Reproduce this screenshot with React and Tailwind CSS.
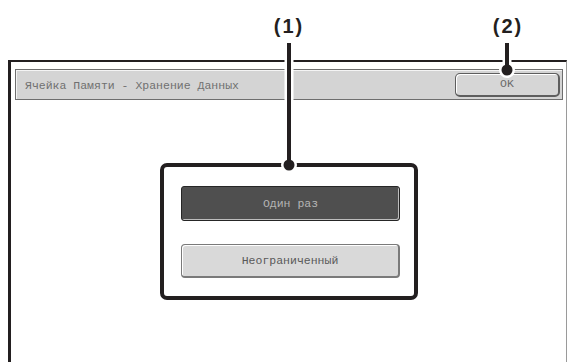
const mono = { fontFamily: '"Liberation Mono", "Courier New", monospace' };

const Callouts = () => (
  <div className="absolute inset-0 pointer-events-none">
    <svg width="568" height="362" className="absolute left-0 top-0">
      {/* white halo so the leader lines break the borders they cross */}
      <line x1="289" y1="43" x2="289" y2="165" stroke="#fff" strokeWidth="9" />
      <line x1="507" y1="43" x2="507" y2="70" stroke="#fff" strokeWidth="9" />
      <circle cx="289" cy="165" r="8" fill="#fff" />
      <circle cx="507" cy="70" r="8" fill="#fff" />
      <line x1="289" y1="43" x2="289" y2="165" stroke="#231f20" strokeWidth="4" />
      <line x1="507" y1="43" x2="507" y2="70" stroke="#231f20" strokeWidth="4" />
      <circle cx="289" cy="165" r="5.5" fill="#231f20" />
      <circle cx="507" cy="70" r="5.5" fill="#231f20" />
    </svg>
    <div
      className="absolute left-[266px] top-[13px] w-[46px] text-center text-[20px] font-bold leading-[26px] tracking-[2px] text-[#231f20]"
      style={{ fontFamily: '"Liberation Sans", Arial, sans-serif' }}
    >
      (1)
    </div>
    <div
      className="absolute left-[485px] top-[13px] w-[46px] text-center text-[20px] font-bold leading-[26px] tracking-[2px] text-[#231f20]"
      style={{ fontFamily: '"Liberation Sans", Arial, sans-serif' }}
    >
      (2)
    </div>
  </div>
);

export default function App() {
  return (
    <div className="relative w-[568px] h-[362px] overflow-hidden bg-white">
      <div className="ml-[8px] mt-[60px] w-[559px] h-[320px] border-l-[3px] border-t-2 border-[#231f20] border-r border-r-[#9a9a9a] pt-[7px] pl-[4px] pr-[3px]">
        {/* Title bar */}
        <div className="flex items-center justify-between h-[31px] bg-[#d4d4d4] border border-[#6e6e6e] shadow-[inset_1px_1px_0_#f4f4f4]">
          <span className="pl-[9px] pt-[3px] text-[11.5px] text-[#707070]" style={mono}>
            Ячейка Памяти - Хранение Данных
          </span>
          <button
            className="mr-[2px] w-[105px] h-[24px] rounded-[5px] bg-[#d6d6d6] border border-[#5e5e5e] border-r-2 border-b-2 shadow-[inset_1px_1px_0_#ffffff] text-[11.5px] text-[#6a6a6a]"
            style={mono}
          >
            OK
          </button>
        </div>

        {/* Selection group */}
        <div className="mt-[63px] mx-auto w-[258px] h-[137px] border-[4px] border-[#231f20] rounded-[7px] pt-[19px] flex flex-col items-center gap-[23px]">
          <button
            className="ml-[3px] w-[219px] h-[35px] rounded-[3px] bg-[#4f4f4f] border border-[#262626] shadow-[inset_-1px_-1px_0_#bdbdbd] text-[11.5px] text-[#b4b4b4]"
            style={mono}
          >
            Один раз
          </button>
          <button
            className="ml-[3px] w-[219px] h-[34px] rounded-[4px] bg-[#d9d9d9] border border-[#7a7a7a] border-r-2 border-b-2 shadow-[inset_1px_1px_0_#ffffff] text-[11.5px] text-[#5a5a5a]"
            style={mono}
          >
            Неограниченный
          </button>
        </div>
      </div>
      <Callouts />
    </div>
  );
}
